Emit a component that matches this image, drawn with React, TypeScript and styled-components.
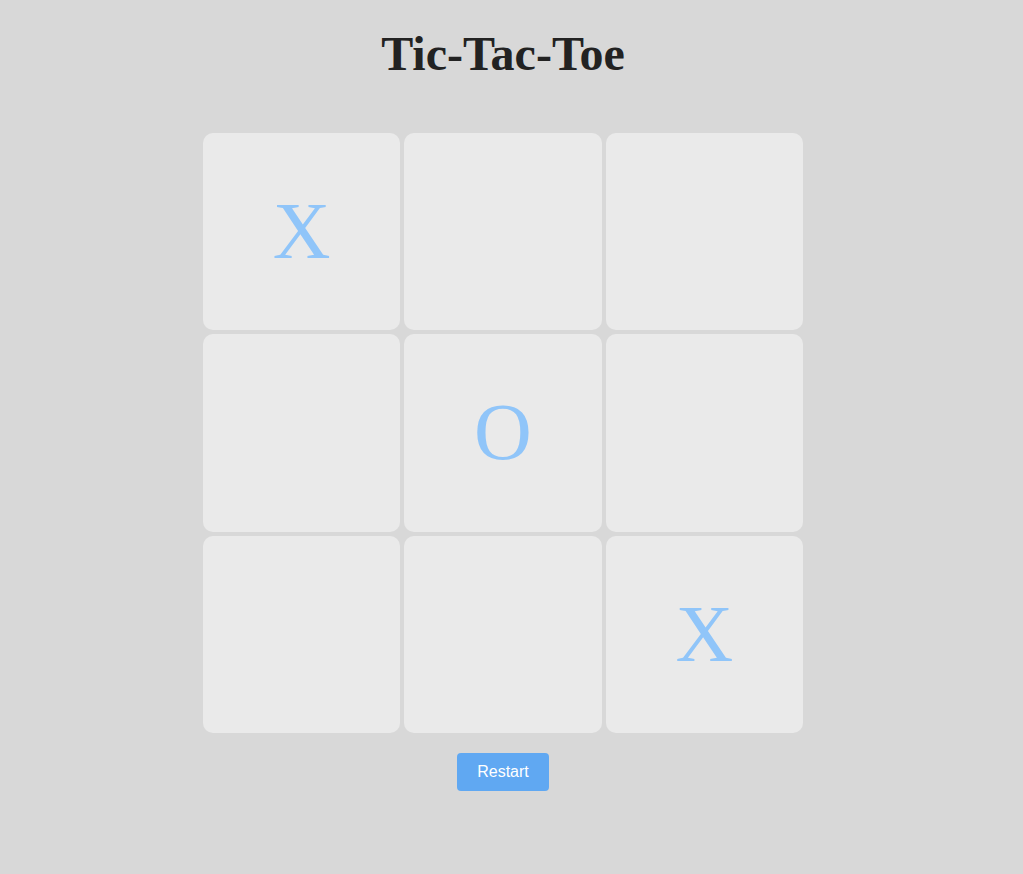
import React, { useState } from "react";
import styled, { createGlobalStyle } from "styled-components";

const Global = createGlobalStyle`
  html, body { margin: 0; padding: 0; background: #d8d8d8; }
  body { font-family: "Liberation Serif", serif; }
`;

const Page = styled.div`
  display: flex;
  flex-direction: column;
  align-items: center;
  padding-top: 27px;
  padding-right: 17px;
`;

const Title = styled.h1`
  margin: 0;
  font-family: "Liberation Serif", serif;
  font-weight: 700;
  font-size: 48px;
  line-height: 54px;
  color: #222222;
`;

const Board = styled.div`
  margin-top: 52px;
  display: grid;
  grid-template-columns: repeat(3, 1fr);
  grid-template-rows: repeat(3, 1fr);
  gap: 4px;
  width: 600px;
  height: 600px;
`;

const Cell = styled.button`
  border: none;
  padding: 0;
  margin: 0;
  background: #eaeaea;
  border-radius: 10px;
  display: flex;
  align-items: center;
  justify-content: center;
  font-family: "Liberation Serif", serif;
  font-size: 80px;
  color: #90c5f9;
  cursor: pointer;
`;

const RestartButton = styled.button`
  margin-top: 20px;
  width: 92px;
  height: 38px;
  border: none;
  border-radius: 4px;
  background: #60a8f2;
  color: #ffffff;
  font-family: "Liberation Sans", Arial, sans-serif;
  font-size: 16px;
  cursor: pointer;
`;

const initial = ["X", "", "", "", "O", "", "", "", "X"];

export default function App() {
  const [cells, setCells] = useState<string[]>(initial);
  return (
    <>
      <Global />
      <Page>
        <Title>Tic-Tac-Toe</Title>
        <Board>
          {cells.map((c, i) => (
            <Cell key={i}>{c}</Cell>
          ))}
        </Board>
        <RestartButton onClick={() => setCells(Array(9).fill(""))}>Restart</RestartButton>
      </Page>
    </>
  );
}
